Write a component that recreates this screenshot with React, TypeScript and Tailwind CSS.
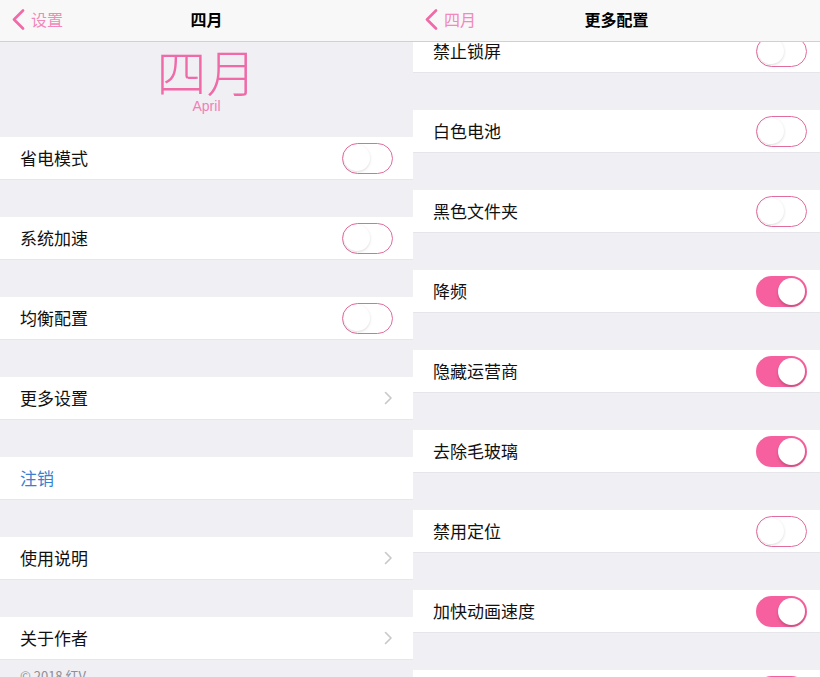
import React from 'react';

const font = { fontFamily: '"Noto Sans CJK SC", "Noto Sans", sans-serif' };

const Toggle: React.FC<{ on?: boolean }> = ({ on }) =>
  on ? (
    <div className="relative w-[51px] h-[31px] rounded-full bg-[#f7609f] flex-shrink-0">
      <div className="absolute right-[2px] top-[2px] w-[27px] h-[27px] rounded-full bg-white shadow-[0_2px_3px_rgba(0,0,0,0.2)]" />
    </div>
  ) : (
    <div className="relative w-[51px] h-[31px] rounded-full bg-white border-[1.5px] border-[#e36c9e] flex-shrink-0">
      <div className="absolute left-[1px] top-[1px] w-[26px] h-[26px] rounded-full bg-white shadow-[0_1px_3px_rgba(0,0,0,0.15)]" />
    </div>
  );

const Chevron = () => (
  <svg width="9" height="14" viewBox="0 0 9 14" fill="none">
    <path d="M1.5 1.5L7 7l-5.5 5.5" stroke="#c7c7cc" strokeWidth="1.6" strokeLinecap="round" strokeLinejoin="round" />
  </svg>
);

const NavBar: React.FC<{ back: string; title: string }> = ({ back, title }) => (
  <div className="relative h-[42px] bg-[#f8f8f8] border-b border-[#cfcfd4] flex items-center justify-center flex-shrink-0 pb-[3px]">
    <div className="absolute left-[12px] top-0 h-full flex items-center gap-[6px] pb-[3px]">
      <svg width="13" height="21" viewBox="0 0 13 21" fill="none">
        <path d="M11 1.5L2 10.5l9 9" stroke="#f06aa8" strokeWidth="2.6" strokeLinecap="round" strokeLinejoin="round" />
      </svg>
      <span className="text-[16px] text-[#f288bb]">{back}</span>
    </div>
    <span className="text-[16px] font-bold text-black">{title}</span>
  </div>
);

type Row = { label: string; kind: 'on' | 'off' | 'link' | 'action' };

const left: Row[] = [
  { label: '省电模式', kind: 'off' },
  { label: '系统加速', kind: 'off' },
  { label: '均衡配置', kind: 'off' },
  { label: '更多设置', kind: 'link' },
  { label: '注销', kind: 'action' },
  { label: '使用说明', kind: 'link' },
  { label: '关于作者', kind: 'link' },
];

const right: Row[] = [
  { label: '禁止锁屏', kind: 'off' },
  { label: '白色电池', kind: 'off' },
  { label: '黑色文件夹', kind: 'off' },
  { label: '降频', kind: 'on' },
  { label: '隐藏运营商', kind: 'on' },
  { label: '去除毛玻璃', kind: 'on' },
  { label: '禁用定位', kind: 'off' },
  { label: '加快动画速度', kind: 'on' },
  { label: '', kind: 'on' },
];

const Cell: React.FC<{ row: Row; pr: string }> = ({ row, pr }) => (
  <div className={`h-[43px] flex-shrink-0 bg-white flex items-center justify-between pl-5 ${pr} border-b border-[#e6e6ea]`}>
    <span className={`text-[17px] ${row.kind === 'action' ? 'text-[#3a7fcf]' : 'text-[#111]'}`}>{row.label}</span>
    {row.kind === 'on' && <Toggle on />}
    {row.kind === 'off' && <Toggle />}
    {row.kind === 'link' && <Chevron />}
  </div>
);

export default function App() {
  return (
    <div className="h-[677px] w-[820px] overflow-hidden flex bg-[#efeff4]" style={font}>
      <div className="w-[413px] flex flex-col">
        <NavBar back="设置" title="四月" />
        <div className="h-[95px] flex-shrink-0 flex flex-col items-center">
          <span className="text-[50px] font-light leading-[56px] text-[#f06aa8]">四月</span>
          <span className="text-[14px] leading-[16px] text-[#f27fb6] font-['Liberation_Sans']">April</span>
        </div>
        <div className="flex flex-col gap-[37px] flex-shrink-0">
          {left.map(r => (
            <Cell key={r.label} row={r} pr="pr-5" />
          ))}
        </div>
        <div className="pl-5 pt-[6px] text-[13px] text-[#8e8e93] flex-shrink-0">© 2018 红V</div>
      </div>
      <div className="flex-1 flex flex-col">
        <NavBar back="四月" title="更多配置" />
        <div className="flex-1 overflow-hidden">
          <div className="flex flex-col gap-[37px] -mt-[12px]">
            {right.map((r, i) => (
              <Cell key={i} row={r} pr="pr-[13px]" />
            ))}
          </div>
        </div>
      </div>
    </div>
  );
}
